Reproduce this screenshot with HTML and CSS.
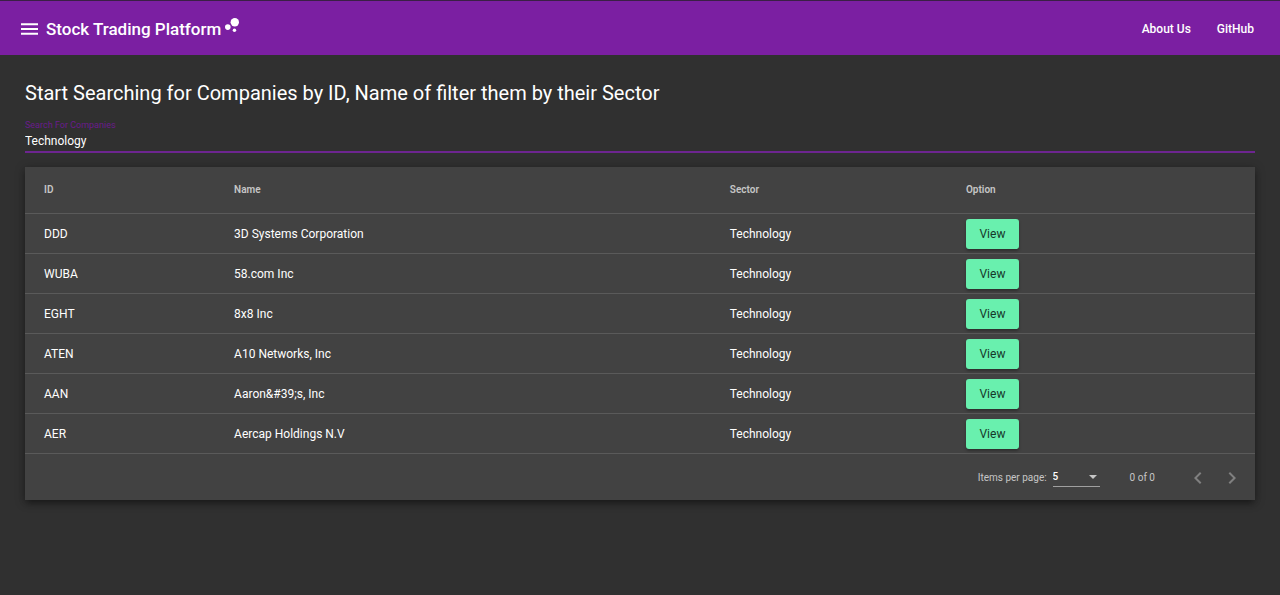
FILE: index.html
```html
<!DOCTYPE html>
<html lang="en">
<head>
<meta charset="utf-8">
<meta name="viewport" content="width=device-width, initial-scale=1">
<title>Stock Trading Platform</title>
<link rel="stylesheet" href="styles.css">
</head>
<body>
<header class="toolbar">
  <button class="icon-button menu-button" type="button" aria-label="Menu">
    <svg class="menu-icon" viewBox="3 6 18 12" aria-hidden="true"><path d="M3 18h18v-2H3v2zm0-5h18v-2H3v2zm0-7v2h18V6H3z"/></svg>
  </button>
  <span class="brand">Stock Trading Platform</span>
  <svg class="brand-icon" viewBox="4 4 16 16" aria-hidden="true"><circle cx="7.2" cy="14.4" r="3.2"/><circle cx="14.8" cy="18" r="2"/><circle cx="15.2" cy="8.8" r="4.8"/></svg>
  <nav class="nav">
    <a class="nav-link" href="#about">About Us</a>
    <a class="nav-link" href="#github">GitHub</a>
  </nav>
</header>
<main class="content">
  <h1 class="heading">Start Searching for Companies by ID, Name of filter them by their Sector</h1>
  <div class="field">
    <label class="field-label" for="search">Search For Companies</label>
    <input class="field-input" id="search" type="text" value="Technology">
  </div>
  <section class="card">
    <table class="table">
      <thead>
        <tr><th class="col-id">ID</th><th class="col-name">Name</th><th class="col-sector">Sector</th><th>Option</th></tr>
      </thead>
      <tbody>
        <tr><td>DDD</td><td>3D Systems Corporation</td><td>Technology</td><td><button class="view" type="button">View</button></td></tr>
        <tr><td>WUBA</td><td>58.com Inc</td><td>Technology</td><td><button class="view" type="button">View</button></td></tr>
        <tr><td>EGHT</td><td>8x8 Inc</td><td>Technology</td><td><button class="view" type="button">View</button></td></tr>
        <tr><td>ATEN</td><td>A10 Networks, Inc</td><td>Technology</td><td><button class="view" type="button">View</button></td></tr>
        <tr><td>AAN</td><td>Aaron&amp;#39;s, Inc</td><td>Technology</td><td><button class="view" type="button">View</button></td></tr>
        <tr><td>AER</td><td>Aercap Holdings N.V</td><td>Technology</td><td><button class="view" type="button">View</button></td></tr>
      </tbody>
    </table>
    <div class="paginator">
      <label for="page-size">Items per page:</label>
      <div class="select-box">
        <select class="page-size" id="page-size"><option>5</option><option>10</option><option>20</option></select>
        <svg class="arrow" viewBox="0 0 10 5" aria-hidden="true"><path d="M0 0h10L5 5z"/></svg>
      </div>
      <span class="range">0 of 0</span>
      <button class="icon-button page-button" type="button" aria-label="Previous page" disabled><svg class="chevron" viewBox="0 0 24 24" aria-hidden="true"><path d="M15.41 7.41L14 6l-6 6 6 6 1.41-1.41L10.83 12z"/></svg></button>
      <button class="icon-button page-button" type="button" aria-label="Next page" disabled><svg class="chevron" viewBox="0 0 24 24" aria-hidden="true"><path d="M10 6L8.59 7.41 13.17 12l-4.58 4.59L10 18l6-6z"/></svg></button>
    </div>
  </section>
</main>
</body>
</html>
```
FILE: styles.css
```css
* {
  box-sizing: border-box;
}

body {
  margin: 0;
  background: #303030;
  color: #fff;
  font-family: Roboto, "Liberation Sans", sans-serif;
  font-size: 12px;
}

svg {
  display: block;
  fill: currentColor;
}

.icon-button {
  display: flex;
  align-items: center;
  justify-content: center;
  padding: 0;
  border: 0;
  background: none;
  color: inherit;
}

.toolbar {
  display: flex;
  align-items: center;
  height: 55px;
  padding: 2px 26px 0 21px;
  border-top: 1px solid #3a1f45;
  background: #7b1fa2;
}

.menu-button {
  width: 17px;
  height: 24px;
  margin-right: 8px;
}

.menu-icon {
  width: 17px;
  height: 12px;
}

.brand {
  font-size: 17px;
  font-weight: 500;
}

.brand-icon {
  width: 14px;
  height: 14px;
  margin: 0 0 8px 4px;
}

.nav {
  display: flex;
  gap: 26px;
  margin-left: auto;
}

.nav-link {
  color: inherit;
  font-weight: 500;
  text-decoration: none;
}

.content {
  padding: 24px 25px;
}

.heading {
  margin: 0 0 12px;
  font-size: 20px;
  font-weight: 400;
  line-height: 28px;
}

.field {
  display: flex;
  flex-direction: column;
  margin-bottom: 14px;
  border-bottom: 2px solid #6d2590;
}

.field-label {
  color: #6a1b8c;
  font-size: 9px;
  line-height: 12px;
}

.field-input {
  width: 100%;
  height: 20px;
  padding: 0;
  border: 0;
  outline: 0;
  background: none;
  color: inherit;
  font: inherit;
}

.card {
  background: #424242;
  box-shadow: 0 4px 6px -1px rgba(0, 0, 0, 0.3), 0 2px 10px rgba(0, 0, 0, 0.3);
}

.table {
  width: 100%;
  border-collapse: separate;
  border-spacing: 0;
  table-layout: fixed;
}

.table th,
.table td {
  height: 40px;
  padding: 0;
  border-bottom: 1px solid #5a5a5a;
  text-align: left;
}

.table th {
  height: 47px;
  padding-bottom: 2px;
  color: #c6c6c6;
  font-size: 10px;
  font-weight: 600;
}

.table th:first-child,
.table td:first-child {
  padding-left: 19px;
}

.col-id {
  width: 17%;
}

.col-name {
  width: 40.3%;
}

.col-sector {
  width: 19.2%;
}

.view {
  display: block;
  min-width: 53px;
  height: 30px;
  padding: 0 13px;
  border: 0;
  border-radius: 3px;
  background: #69f0ae;
  box-shadow: 0 2px 3px rgba(0, 0, 0, 0.3);
  color: #16382a;
  font: inherit;
  line-height: 30px;
}

.paginator {
  display: flex;
  align-items: center;
  justify-content: flex-end;
  height: 46px;
  padding-right: 6px;
  color: #c6c6c6;
  font-size: 10px;
}

.select-box {
  display: grid;
  align-items: center;
  width: 47px;
  margin: 0 30px 0 6px;
  border-bottom: 1px solid #a0a0a0;
}

.page-size {
  grid-area: 1 / 1;
  width: 100%;
  height: 18px;
  padding: 0;
  border: 0;
  outline: 0;
  appearance: none;
  background: none;
  color: #fff;
  font: inherit;
  font-weight: 500;
}

.arrow {
  grid-area: 1 / 1;
  justify-self: end;
  width: 8px;
  height: 4px;
  margin-right: 3px;
  pointer-events: none;
}

.range {
  margin-right: 26px;
}

.page-button {
  width: 34px;
  height: 34px;
  padding-top: 2px;
  color: #808080;
}

.chevron {
  width: 24px;
  height: 24px;
}
```
